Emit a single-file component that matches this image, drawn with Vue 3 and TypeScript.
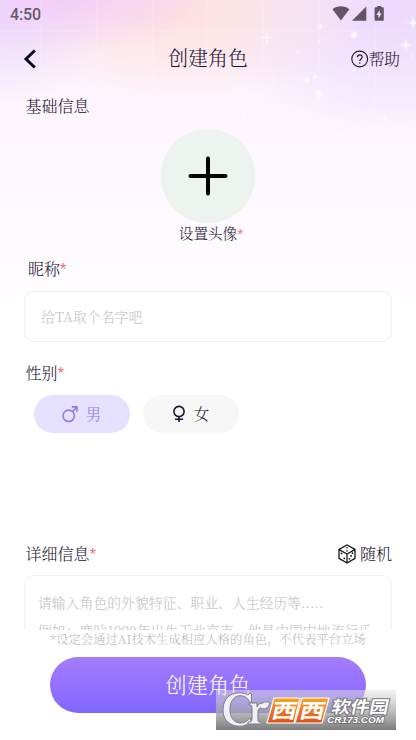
<script setup lang="ts">
import { ref } from 'vue'

type Gender = 'male' | 'female'

interface Sparkle {
  x: number
  y: number
  r: number
  o: number
}

const gender = ref<Gender>('male')
const nickname = ref('')

const gridX: number[] = [41, 97, 153, 208, 263, 319, 375]
const gridY: number[] = [31, 77, 122]

const glows: Sparkle[] = [
  { x: 320, y: 26.5, r: 3.4, o: 0.9 },
  { x: 354, y: 35, r: 4.4, o: 0.9 },
  { x: 319, y: 41.5, r: 2.2, o: 0.8 },
  { x: 325, y: 40, r: 1.6, o: 0.7 },
  { x: 298, y: 52, r: 2.4, o: 0.6 },
  { x: 273, y: 80, r: 2.4, o: 0.6 },
  { x: 307, y: 80, r: 3.4, o: 0.8 },
  { x: 315, y: 77, r: 2.6, o: 0.8 },
  { x: 319, y: 94, r: 5, o: 0.9 },
  { x: 354, y: 70, r: 2.4, o: 0.6 },
  { x: 385, y: 118, r: 3, o: 0.7 },
  { x: 228, y: 109, r: 2, o: 0.6 },
  { x: 376, y: 128, r: 2, o: 0.7 },
  { x: 325, y: 149, r: 4, o: 0.6 },
  { x: 406, y: 45, r: 3.5, o: 0.9 },
  { x: 413, y: 23, r: 3, o: 0.9 },
]

const stars: Sparkle[] = [
  { x: 267, y: 37.5, r: 8, o: 0.9 },
  { x: 413, y: 23, r: 8, o: 0.9 },
  { x: 406, y: 45, r: 8, o: 0.9 },
  { x: 412, y: 56, r: 4, o: 0.7 },
  { x: 320, y: 26.5, r: 4, o: 0.5 },
  { x: 354, y: 35, r: 5, o: 0.5 },
  { x: 319, y: 94, r: 6, o: 0.5 },
  { x: 244, y: 115, r: 7, o: 0.6 },
]

function starPath(s: Sparkle): string {
  const k = s.r * 0.09
  return `M${s.x} ${s.y - s.r}L${s.x + k} ${s.y - k}L${s.x + s.r} ${s.y}L${s.x + k} ${s.y + k}L${s.x} ${s.y + s.r}L${s.x - k} ${s.y + k}L${s.x - s.r} ${s.y}L${s.x - k} ${s.y - k}Z`
}
</script>

<template>
  <div class="screen">
    <svg class="sky" width="416" height="240" viewBox="0 0 416 240" aria-hidden="true">
      <defs>
        <radialGradient id="glow">
          <stop offset="0" stop-color="#fff" />
          <stop offset="0.35" stop-color="#fff" stop-opacity="0.8" />
          <stop offset="1" stop-color="#fff" stop-opacity="0" />
        </radialGradient>
      </defs>
      <g stroke="#fff" stroke-opacity="0.22" stroke-width="1.2">
        <line v-for="x in gridX" :key="'x' + x" :x1="x" y1="0" :x2="x" y2="122" />
        <line v-for="y in gridY" :key="'y' + y" x1="0" :y1="y" x2="416" :y2="y" />
      </g>
      <circle v-for="(g, i) in glows" :key="'g' + i" :cx="g.x" :cy="g.y" :r="g.r" :opacity="g.o" fill="url(#glow)" />
      <path v-for="(s, i) in stars" :key="'s' + i" :d="starPath(s)" :opacity="s.o" fill="#fff" />
    </svg>

    <div class="status">
      <span class="clock">4:50</span>
      <svg class="status-icons" width="52" height="16" viewBox="0 0 52 16" fill="#625567">
        <path d="M0.500 3.2C5.2-0.600 12.2-0.600 17.400 3.2L8.900 14.600Z" />
        <path d="M34.300 0.500V14.800H20Z" />
        <path d="M45.700 1.200V0h4v1.200h1.600c.6 0 1 .4 1 1v11.600c0 .6-.4 1-1 1h-7.2c-.6 0-1-.4-1-1V2.200c0-.6.4-1 1-1Z" transform="translate(-0.500 0)" />
        <path fill="#efe0fb" d="M47.700 4L44.400 8.900h2v3.600l3.300-5h-2Z" />
      </svg>
    </div>

    <header class="topbar">
      <button class="back" aria-label="返回">
        <svg width="14" height="20" viewBox="0 0 14 20" fill="none" stroke="#0d0820" stroke-width="3">
          <path d="M11.800 1.500L3 10L11.800 18.500" />
        </svg>
      </button>
      <h1>创建角色</h1>
      <button class="help">
        <svg width="18" height="18" viewBox="0 0 18 18" fill="none" stroke="#1b1330">
          <circle cx="8.700" cy="9" r="7.900" stroke-width="1.100" />
          <path d="M6.400 7.300C6.400 4 11.100 4 11.100 7C11.100 8.800 8.800 8.900 8.800 11" stroke-width="1.200" />
          <circle cx="8.800" cy="12.900" r="0.750" fill="#1b1330" stroke="none" />
        </svg>
        <span>帮助</span>
      </button>
    </header>

    <main class="form">
      <h2 class="label basic">基础信息</h2>

      <div class="avatar">
        <button class="avatar-pick" aria-label="设置头像">
          <svg width="40" height="40" viewBox="0 0 40 40" stroke="#000" stroke-width="4" stroke-linecap="round">
            <path d="M20 2.500V37.500M2.500 20H37.500" />
          </svg>
        </button>
        <div class="avatar-label">设置头像<i>*</i></div>
      </div>

      <div class="label nick">昵称<i>*</i></div>
      <input v-model="nickname" class="field" placeholder="给TA取个名字吧" />

      <div class="label sex">性别<i>*</i></div>
      <div class="pills">
        <button class="pill" :class="{ active: gender === 'male' }" @click="gender = 'male'">
          <svg width="16" height="18" viewBox="0 0 16 18" fill="none" stroke="currentColor" stroke-width="1.600">
            <circle cx="6.700" cy="10.800" r="5.700" />
            <path d="M10.600 6.500L14.600 2.300M9.800 1.900H14.900V6.800" />
          </svg>
          <span>男</span>
        </button>
        <button class="pill" :class="{ active: gender === 'female' }" @click="gender = 'female'">
          <svg width="14" height="18" viewBox="0 0 14 18" fill="none" stroke="currentColor" stroke-width="1.600">
            <circle cx="7" cy="6.500" r="5.100" />
            <path d="M7 11.600V17M3 14.200H11" />
          </svg>
          <span>女</span>
        </button>
      </div>

      <div class="detail-head">
        <div class="label">详细信息<i>*</i></div>
        <button class="random">
          <svg width="18" height="20" viewBox="0 0 18 20" fill="none" stroke="#17131f" stroke-width="1.300" stroke-linejoin="round">
            <path d="M9 1L17 5.400V14.400L9 19L1 14.400V5.400ZM1.200 5.600L9 10L16.800 5.600M9 10V18.800" />
            <g fill="#17131f" stroke="none">
              <circle cx="9" cy="3.800" r="0.800" />
              <circle cx="9" cy="7" r="0.800" />
              <circle cx="3.500" cy="9.500" r="0.900" />
              <circle cx="6.300" cy="14.400" r="0.900" />
              <circle cx="14.500" cy="9.200" r="0.900" />
              <circle cx="13" cy="12" r="0.900" />
              <circle cx="11.400" cy="14.800" r="0.900" />
            </g>
          </svg>
          <span>随机</span>
        </button>
      </div>
      <div class="detail-box">
        <p>请输入角色的外貌特征、职业、人生经历等.....</p>
        <p>例如：鹿晗1990年出生于北京市，他是中国内地流行乐</p>
      </div>
    </main>

    <footer class="footer">
      <p class="note">*设定会通过AI技术生成相应人格的角色，不代表平台立场</p>
      <button class="submit"><span>创建角色</span></button>
    </footer>

    <svg class="watermark" width="180" height="40" viewBox="0 0 180 40">
      <defs>
        <linearGradient id="wm-bg" x1="0" y1="0" x2="0" y2="1">
          <stop offset="0" stop-color="#e4e4e4" stop-opacity="0.5" />
          <stop offset="0.5" stop-color="#acacac" stop-opacity="0.75" />
          <stop offset="1" stop-color="#777" stop-opacity="0.97" />
        </linearGradient>
        <linearGradient id="wm-tile" x1="0" y1="0" x2="0" y2="1">
          <stop offset="0" stop-color="#f9a51c" />
          <stop offset="1" stop-color="#e0501c" />
        </linearGradient>
      </defs>
      <rect width="180" height="40" fill="url(#wm-bg)" />
      <g fill="#f0eff5" stroke="#7d7d84" stroke-width="1" stroke-linejoin="round">
        <path d="M35.500 4V13H34C31 3 15 2 14 18C13 34 27 37 34 28L35 31C29 40 7 38 7 20C7 3 23 0 32 5L33.500 3Z" />
        <path d="M33 13H41V17C42 14 44 13 47 13C49 11 52 12 54 13C52 19 48 20 45 18C42 18 42 20 42 23V30C42 32 43 32 45 32V34H32V32C35 32 36 31 36 29V17C36 15 35 15 33 15Z" />
      </g>
      <g fill="url(#wm-tile)" stroke="#fff" stroke-width="1.200" stroke-linejoin="round">
        <path d="M58 8H84L78 33H51Z" />
        <path d="M86 8H113L106 33H79Z" />
      </g>
      <text class="wm-tile-text" transform="translate(54.500 27.500) skewX(-13)" textLength="25" lengthAdjust="spacingAndGlyphs">西</text>
      <text class="wm-tile-text" transform="translate(82.500 27.500) skewX(-13)" textLength="25" lengthAdjust="spacingAndGlyphs">西</text>
      <text class="wm-name" transform="translate(114.500 22.500) skewX(-12)" textLength="57" lengthAdjust="spacingAndGlyphs">软件园</text>
      <text class="wm-url" x="111" y="33" textLength="57" lengthAdjust="spacingAndGlyphs">CR173.COM</text>
    </svg>
  </div>
</template>

<style>
body {
  margin: 0;
  background: #fff;
}
</style>

<style scoped>
.screen {
  position: relative;
  display: flex;
  flex-direction: column;
  width: 416px;
  height: 740px;
  overflow: hidden;
  color: #1b1330;
  font-family: 'Noto Serif CJK SC', 'Noto Sans CJK SC', serif;
  font-weight: 300;
  background:
    radial-gradient(ellipse 150px 65px at 72px -12px, rgba(242, 196, 250, 0.8), rgba(242, 196, 250, 0) 100%),
    radial-gradient(ellipse 110px 85px at 0 20px, rgba(228, 208, 255, 0.7), rgba(228, 208, 255, 0) 100%),
    radial-gradient(ellipse 190px 85px at 180px 15px, rgba(255, 224, 222, 0.95), rgba(255, 226, 224, 0) 100%),
    radial-gradient(ellipse 190px 125px at 395px 15px, rgba(236, 216, 253, 1), rgba(241, 227, 255, 0.75) 55%, rgba(246, 238, 255, 0) 100%),
    linear-gradient(180deg, #fbecf9 0, #fdf4fc 85px, #fdf7ff 150px, #fefaff 230px, #fff 345px);
}

button {
  display: flex;
  align-items: center;
  padding: 0;
  border: 0;
  background: none;
  color: inherit;
  font: inherit;
}

h1,
h2,
p {
  margin: 0;
  font-weight: 300;
}

i {
  color: #f0706c;
  font-family: 'Liberation Sans', sans-serif;
  font-size: 1.050em;
  font-style: normal;
  font-weight: 400;
  line-height: 0;
}

.sky {
  position: absolute;
  top: 0;
  left: 0;
}

.status {
  position: relative;
  display: flex;
  flex: none;
  justify-content: space-between;
  height: 28px;
  padding: 6px 32px 0 10px;
  box-sizing: border-box;
}

.clock {
  color: #665a6b;
  font: 500 16px/18px Roboto, sans-serif;
  letter-spacing: -0.1px;
}

.topbar {
  position: relative;
  display: grid;
  flex: none;
  grid-template-columns: 1fr auto 1fr;
  align-items: center;
  height: 61px;
  padding: 0 16px 0 23px;
}

.back svg {
  display: block;
}

.topbar h1 {
  margin-right: 7px;
  padding-bottom: 1px;
  font-size: 19.900px;
  line-height: 28px;
}

.help {
  justify-self: end;
  font-size: 15.7px;
  line-height: 24px;
}

.help span {
  padding-bottom: 2px;
}

.form {
  position: relative;
  display: flex;
  flex: none;
  flex-direction: column;
  height: 541px;
  padding: 0 24px;
  overflow: hidden;
  box-sizing: border-box;
}

.label {
  padding-left: 1.500px;
  font-size: 16px;
  line-height: 24px;
}

.basic {
  margin-top: 5px;
}

.avatar {
  display: flex;
  flex-direction: column;
  align-items: center;
  margin-top: 11px;
}

.avatar-pick {
  justify-content: center;
  width: 94px;
  height: 94px;
  border-radius: 50%;
  background: #edf3ee;
}

.avatar-label {
  padding-left: 6px;
  font-size: 14.600px;
  line-height: 20px;
}

.nick {
  margin-top: 14px;
  padding-left: 4px;
}

.field {
  flex: none;
  height: 51px;
  margin-top: 10px;
  padding: 0 16px 2px;
  border: 1px solid #efefef;
  border-radius: 10px;
  outline: 0;
  box-sizing: border-box;
  background: #fff;
  color: inherit;
  font: inherit;
  font-size: 13.900px;
}

.field::placeholder {
  color: #c2c2c2;
  opacity: 1;
}

.sex {
  margin-top: 19px;
}

.pills {
  display: flex;
  gap: 13px;
  margin-top: 10px;
  padding-left: 10px;
}

.pill {
  gap: 8px;
  justify-content: center;
  width: 96px;
  height: 38px;
  padding-right: 1px;
  border-radius: 19px;
  box-sizing: border-box;
  background: #f7f7f7;
  font-size: 15.500px;
}

.pill span {
  padding-bottom: 2px;
}

.pill.active {
  background: #e6e1ff;
  color: #9377e8;
}

.detail-head {
  display: flex;
  justify-content: space-between;
  margin-top: 109px;
}

.random {
  gap: 4px;
  font-size: 16px;
  line-height: 24px;
}

.detail-box {
  height: 100px;
  margin-top: 9px;
  padding: 12px 13px 0;
  border: 1px solid #efefef;
  border-radius: 10px;
  flex: none;
  box-sizing: border-box;
  background: #fff;
  color: #c2c2c2;
  font-size: 13.850px;
  line-height: 28px;
  white-space: nowrap;
}

.footer {
  position: relative;
  display: flex;
  flex: none;
  flex-direction: column;
  align-items: center;
  height: 110px;
  background: #fff;
}

.note {
  color: #b8b8b8;
  font-size: 12.330px;
  line-height: 18px;
  white-space: nowrap;
}

.submit {
  justify-content: center;
  width: 316px;
  height: 56px;
  margin-top: 9px;
  border-radius: 28px;
  background: linear-gradient(180deg, #a57cfd, #8067ff);
  color: #fff;
  font-size: 21.200px;
}

.submit span {
  padding-bottom: 3px;
}

.watermark {
  position: absolute;
  top: 690px;
  left: 216px;
}

.wm-tile-text {
  fill: #fff;
  font: 700 20px 'Noto Sans CJK SC', sans-serif;
}

.wm-name {
  fill: #fff;
  stroke: #77777a;
  stroke-width: 2px;
  paint-order: stroke;
  font: 700 17px 'Noto Sans CJK SC', sans-serif;
}

.wm-url {
  fill: #fff;
  stroke: #6c6c6e;
  stroke-width: 1.500px;
  paint-order: stroke;
  font: italic 700 9.500px 'Liberation Sans', sans-serif;
}
</style>
